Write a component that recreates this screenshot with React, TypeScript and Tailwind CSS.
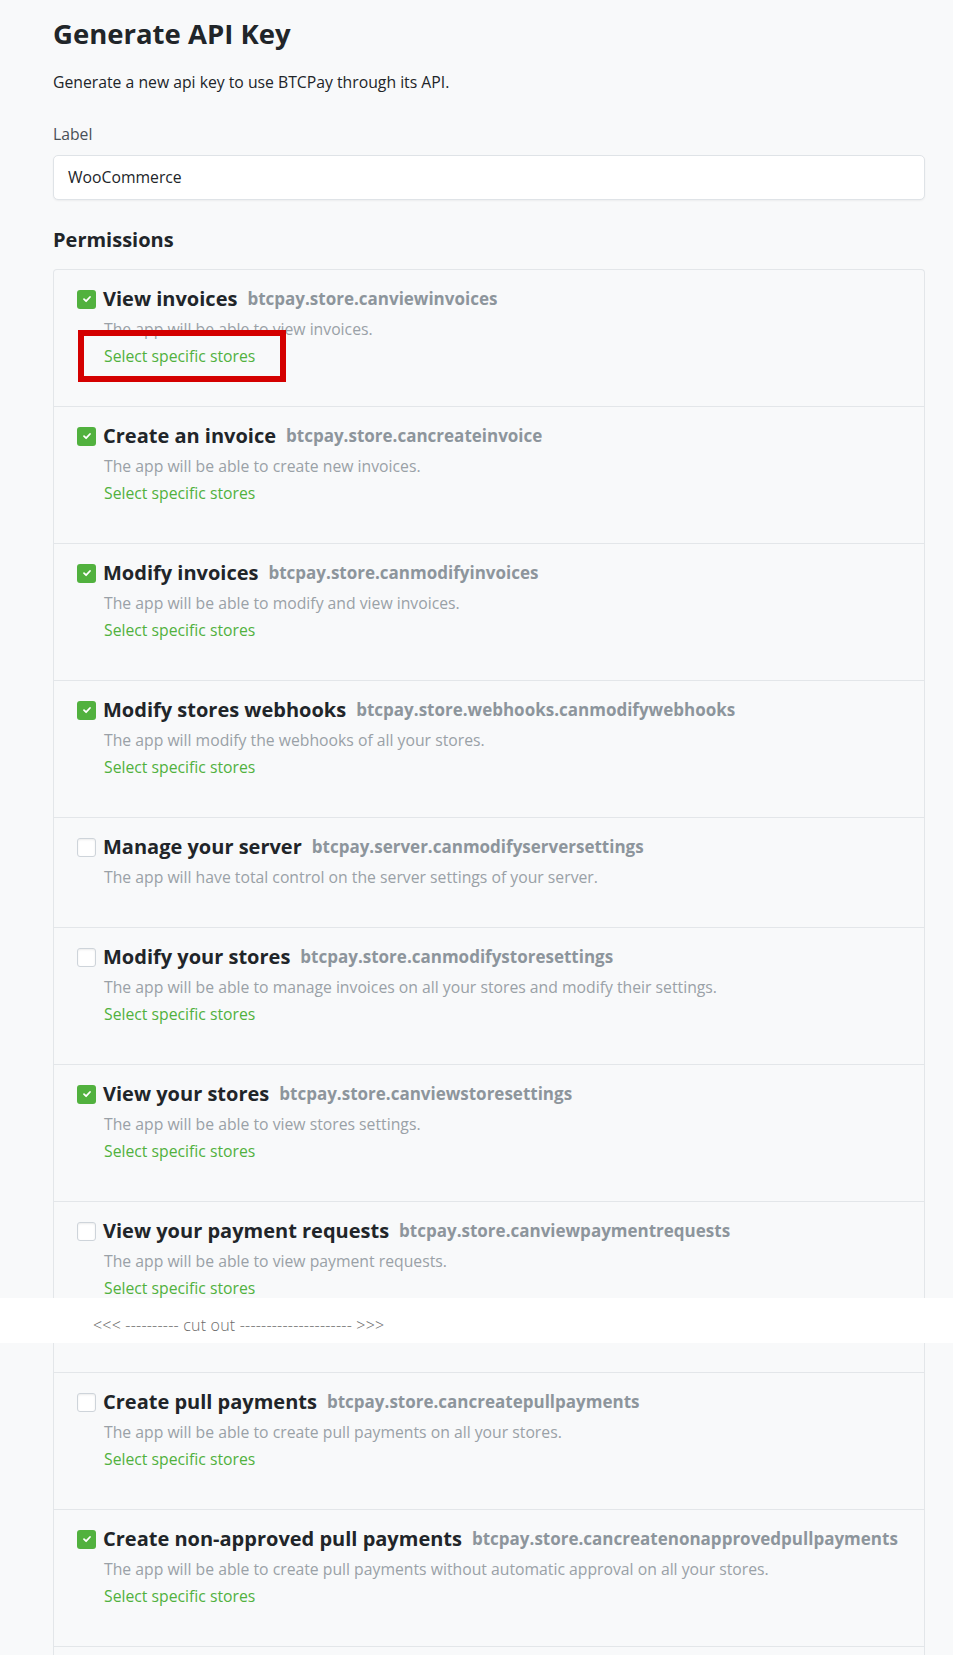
import React from "react";

type Perm = {
  title: string;
  code: string;
  desc: string;
  checked: boolean;
  stores: boolean;
};

const before: Perm[] = [
  { title: "View invoices", code: "btcpay.store.canviewinvoices", desc: "The app will be able to view invoices.", checked: true, stores: true },
  { title: "Create an invoice", code: "btcpay.store.cancreateinvoice", desc: "The app will be able to create new invoices.", checked: true, stores: true },
  { title: "Modify invoices", code: "btcpay.store.canmodifyinvoices", desc: "The app will be able to modify and view invoices.", checked: true, stores: true },
  { title: "Modify stores webhooks", code: "btcpay.store.webhooks.canmodifywebhooks", desc: "The app will modify the webhooks of all your stores.", checked: true, stores: true },
  { title: "Manage your server", code: "btcpay.server.canmodifyserversettings", desc: "The app will have total control on the server settings of your server.", checked: false, stores: false },
  { title: "Modify your stores", code: "btcpay.store.canmodifystoresettings", desc: "The app will be able to manage invoices on all your stores and modify their settings.", checked: false, stores: true },
  { title: "View your stores", code: "btcpay.store.canviewstoresettings", desc: "The app will be able to view stores settings.", checked: true, stores: true },
];

const cutRow: Perm = {
  title: "View your payment requests",
  code: "btcpay.store.canviewpaymentrequests",
  desc: "The app will be able to view payment requests.",
  checked: false,
  stores: true,
};

const after: Perm[] = [
  { title: "Create pull payments", code: "btcpay.store.cancreatepullpayments", desc: "The app will be able to create pull payments on all your stores.", checked: false, stores: true },
  { title: "Create non-approved pull payments", code: "btcpay.store.cancreatenonapprovedpullpayments", desc: "The app will be able to create pull payments without automatic approval on all your stores.", checked: true, stores: true },
];

function Checkbox({ checked }: { checked: boolean }) {
  if (checked) {
    return (
      <span className="flex h-[19px] w-[19px] shrink-0 items-center justify-center rounded-[3px] bg-[#51b13e]">
        <svg width="10" height="10" viewBox="0 0 10 10" fill="none">
          <path d="M2 5.2 4.1 7.2 8 3" stroke="white" strokeWidth="1.8" strokeLinecap="round" strokeLinejoin="round" />
        </svg>
      </span>
    );
  }
  return (
    <span className="h-[19px] w-[19px] shrink-0 rounded-[3px] border border-[#ced4da] bg-white shadow-[inset_0_1px_2px_rgba(0,0,0,0.08)]" />
  );
}

function PermRow({ p, first, marked }: { p: Perm; first?: boolean; marked?: boolean }) {
  return (
    <div className={`relative ${first ? "" : "border-t border-[#e3e6e9]"} pt-[17px] pb-[40px] pl-[23px] pr-4`}>
      <div className="flex h-6 items-center whitespace-nowrap">
        <Checkbox checked={p.checked} />
        <span className="ml-[7px] text-[20px] font-bold leading-6 text-[#212529]">{p.title}</span>
        <span className="ml-[10px] text-[17px] font-bold leading-6 text-[#8d959c]">{p.code}</span>
      </div>
      <p className="mt-2 pl-[27px] text-[15.75px] leading-5 text-[#9aa1a7]">{p.desc}</p>
      {p.stores && (
        <a className="mt-[7px] block pl-[27px] text-[15.75px] leading-5 text-[#51b13e]">Select specific stores</a>
      )}
      {/* annotation box */}
      {marked && (
        <div className="absolute left-[24px] top-[60px] h-[52px] w-[208px] border-[6px] border-[#d40000]" />
      )}
    </div>
  );
}

export default function App() {
  return (
    <div className="min-h-[1655px] bg-[#f8f9fa] font-['Open_Sans',sans-serif]">
      <div className="ml-[53px] w-[872px] pt-[17px]">
        <h1 className="text-[27.5px] font-bold leading-[34px] text-[#212529]">Generate API Key</h1>
        <p className="mt-[19px] text-[15.75px] leading-6 text-[#212529]">
          Generate a new api key to use BTCPay through its API.
        </p>

        <label className="mt-[28px] block text-[15.75px] leading-6 text-[#495057]">Label</label>
        <div className="mt-[9px] flex h-[45px] items-center rounded-[5px] border border-[#dfe3e7] bg-white px-[14px] text-[15.75px] text-[#212529] shadow-[0_1px_2px_rgba(0,0,0,0.05)]">
          WooCommerce
        </div>

        <h2 className="mt-[26px] text-[20px] font-bold leading-7 text-[#212529]">Permissions</h2>

        <div className="mt-[15px] rounded-t-[4px] border border-b-0 border-[#e3e6e9]">
          {before.map((p, i) => (
            <PermRow key={p.code} p={p} first={i === 0} marked={i === 0} />
          ))}
          <div className="h-[97px] overflow-hidden">
            <PermRow p={cutRow} />
          </div>
        </div>
      </div>

      {/* cut marker */}
      <div className="flex h-[45px] items-center bg-white pl-[93px] pt-[8px]">
        <span className="text-[16px] font-light tracking-[0.2px] text-[#6c6c6c]">
          {"<<< ---------- cut out --------------------- >>>"}
        </span>
      </div>

      <div className="ml-[53px] w-[872px]">
        <div className="border-x border-[#e3e6e9]">
          <div className="h-[29px]" />
          {after.map((p) => (
            <PermRow key={p.code} p={p} />
          ))}
          <div className="h-[20px] border-t border-[#e3e6e9]" />
        </div>
      </div>
    </div>
  );
}
